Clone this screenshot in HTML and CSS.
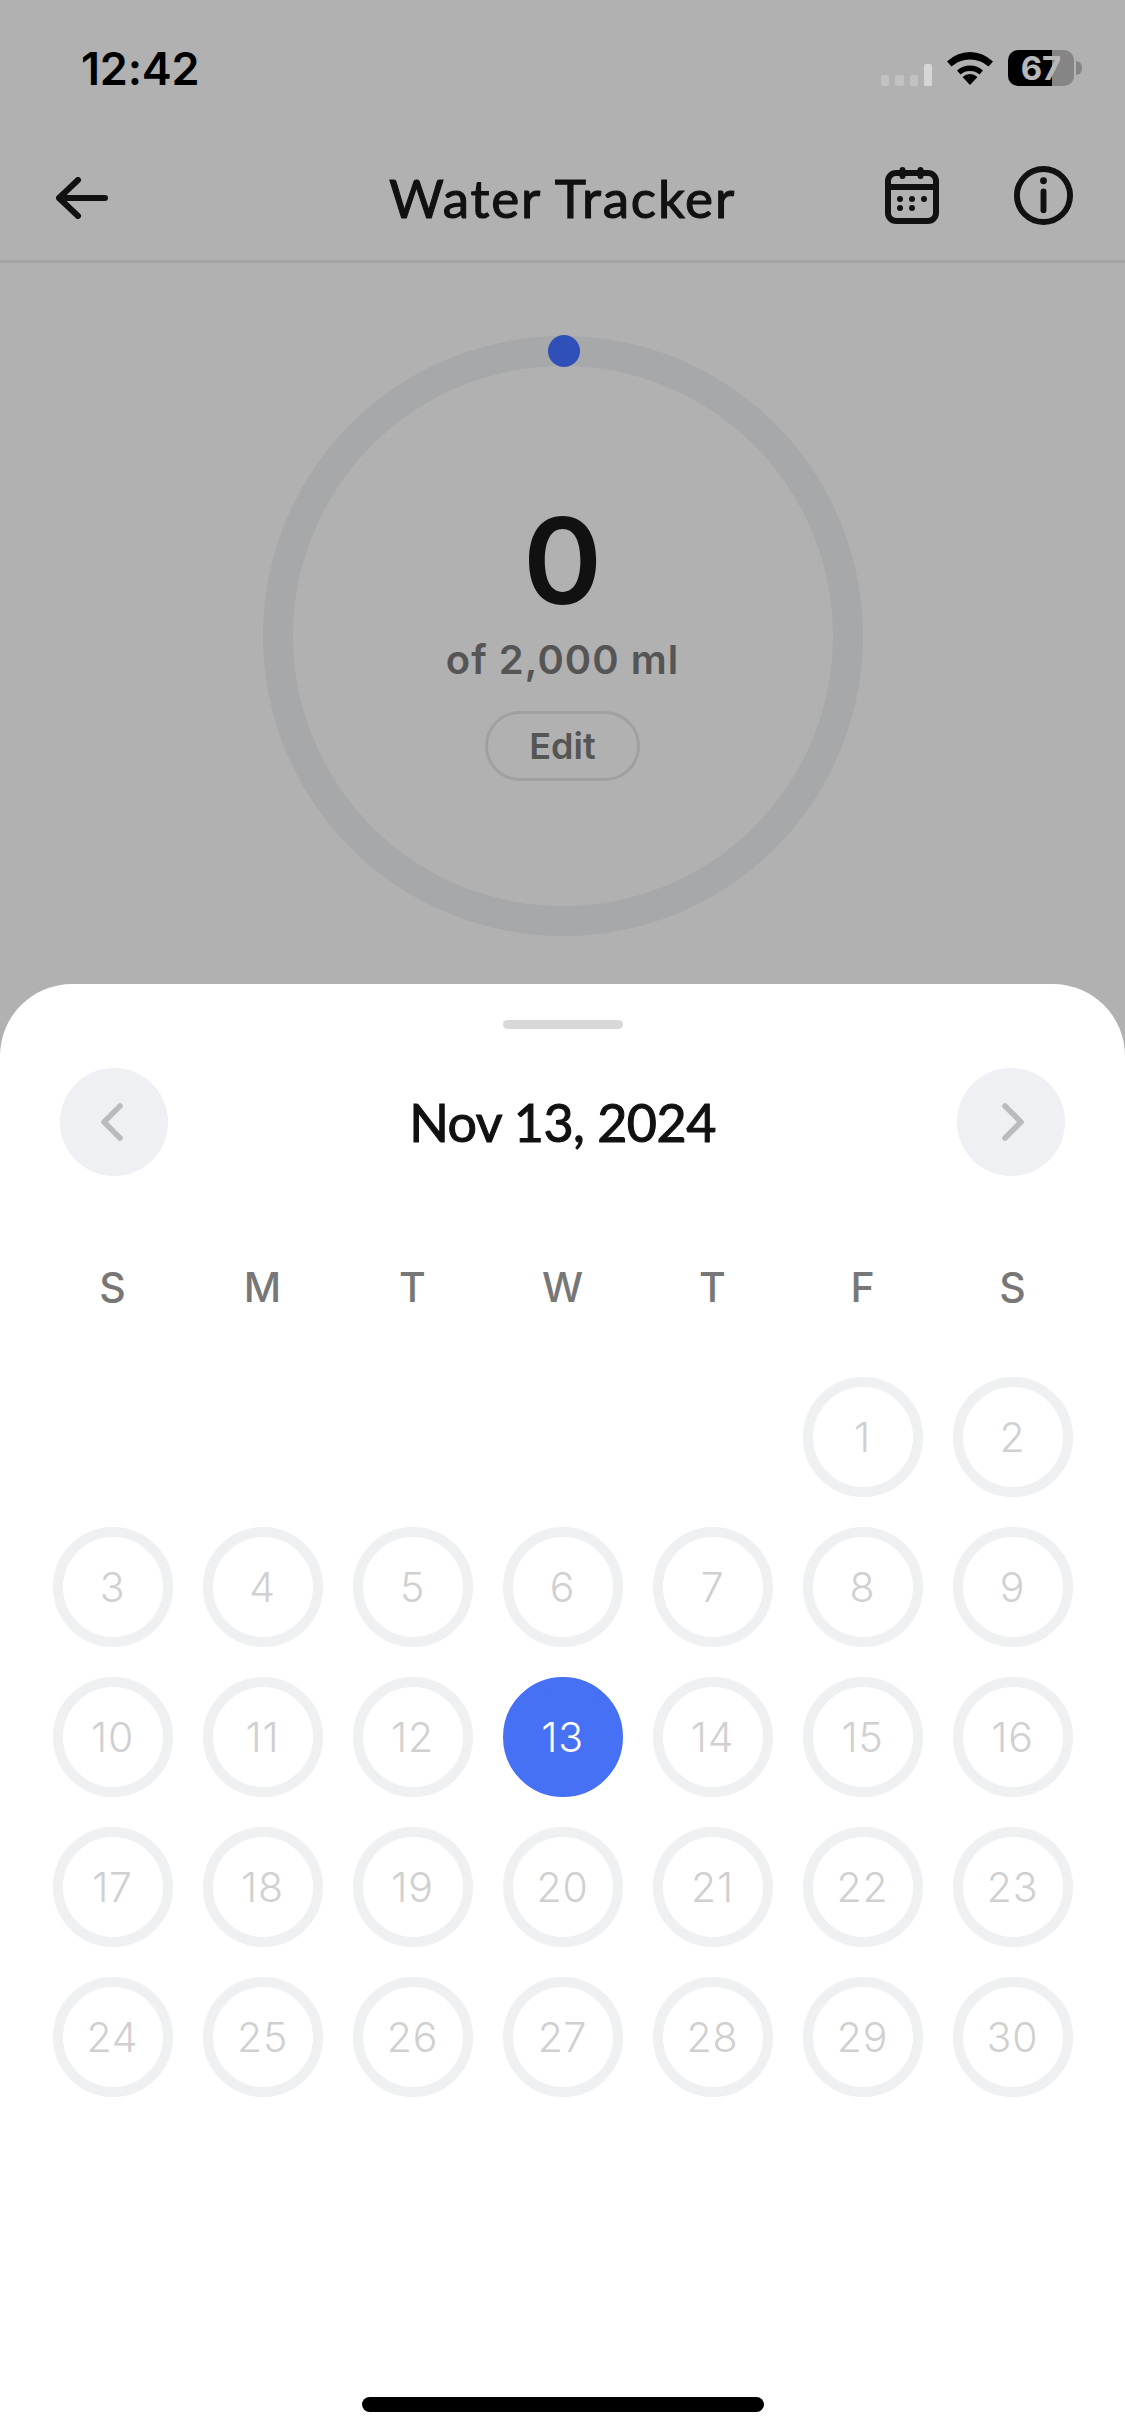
FILE: index.html
```html
<!DOCTYPE html>
<html lang="en">
<head>
<meta charset="utf-8">
<title>Water Tracker</title>
<link rel="stylesheet" href="styles.css">
</head>
<body>
<div class="app">
  <div class="status">
    <span class="time">12:42</span>
    <div class="status-icons">
      <div class="signal"><i></i><i></i><i></i><i class="tall"></i></div>
      <svg class="wifi" viewBox="0 0 46 33"><path d="M23 33 15.500 25A11 11 0 0 1 30.500 25Z M23 13.500A20 20 0 0 1 36 18.500L32.500 22.500A15 15 0 0 0 13.500 22.500L10 18.500A20 20 0 0 1 23 13.500Z M23 0A35 35 0 0 1 46 9.500L41.500 14.500A28 28 0 0 0 4.500 14.500L0 9.500A35 35 0 0 1 23 0Z" fill="#000"/></svg>
      <div class="battery"><div class="battery-body"><span class="battery-num">67</span></div><div class="battery-nub"></div></div>
    </div>
  </div>
  <header class="nav">
    <svg class="back" viewBox="0 0 52 42"><path d="M22 3 3 21 22 39M3 21H49" fill="none" stroke="#111" stroke-width="6" stroke-linecap="round" stroke-linejoin="round"/></svg>
    <h1 class="nav-title">Water Tracker</h1>
    <div class="nav-actions">
      <svg class="cal" viewBox="0 0 54 57"><rect x="3" y="6" width="48" height="48" rx="8" fill="none" stroke="#111" stroke-width="6"/><path d="M3 20H51" stroke="#111" stroke-width="6"/><path d="M17.500 3V9M35.500 3V9" stroke="#111" stroke-width="6" stroke-linecap="round"/><g fill="#111"><circle cx="15" cy="32" r="3"/><circle cx="27" cy="32" r="3"/><circle cx="39" cy="32" r="3"/><circle cx="15" cy="41" r="3"/><circle cx="27" cy="41" r="3"/></g></svg>
      <svg class="info" viewBox="0 0 60 60"><circle cx="30" cy="30" r="27" fill="none" stroke="#111" stroke-width="6"/><circle cx="30" cy="15" r="3.500" fill="#111"/><path d="M30 26V45" stroke="#111" stroke-width="6" stroke-linecap="round"/></svg>
    </div>
  </header>
  <section class="progress">
    <div class="ring">
      <span class="ring-dot"></span>
      <div class="amount">0</div>
      <div class="goal">of 2,000 ml</div>
      <div class="edit">Edit</div>
    </div>
  </section>
  <section class="sheet">
    <div class="handle"></div>
    <div class="month">
      <div class="arrow"><svg viewBox="0 0 26 44"><path d="M19 6 3 22 19 38" fill="none" stroke="#b9bbbf" stroke-width="5.500" stroke-linecap="round" stroke-linejoin="round"/></svg></div>
      <h2 class="date">Nov 13, 2024</h2>
      <div class="arrow"><svg viewBox="0 0 26 44"><path d="M7 6 23 22 7 38" fill="none" stroke="#b9bbbf" stroke-width="5.500" stroke-linecap="round" stroke-linejoin="round"/></svg></div>
    </div>
    <div class="weekdays"><span>S</span><span>M</span><span>T</span><span>W</span><span>T</span><span>F</span><span>S</span></div>
    <div class="days">
      <span class="blank"></span><span class="blank"></span><span class="blank"></span><span class="blank"></span><span class="blank"></span>
      <span class="day">1</span><span class="day">2</span><span class="day">3</span><span class="day">4</span><span class="day">5</span><span class="day">6</span><span class="day">7</span><span class="day">8</span><span class="day">9</span><span class="day">10</span><span class="day">11</span><span class="day">12</span><span class="day selected">13</span><span class="day">14</span><span class="day">15</span><span class="day">16</span><span class="day">17</span><span class="day">18</span><span class="day">19</span><span class="day">20</span><span class="day">21</span><span class="day">22</span><span class="day">23</span><span class="day">24</span><span class="day">25</span><span class="day">26</span><span class="day">27</span><span class="day">28</span><span class="day">29</span><span class="day">30</span>
    </div>
    <div class="home"></div>
  </section>
</div>
</body>
</html>
```
FILE: styles.css
```css
* { box-sizing: border-box; }
html, body { margin: 0; padding: 0; }
body { background: #b1b1b1; font-family: "Inter", "Noto Sans", sans-serif; color: #111; }
.app { width: 1125px; height: 2436px; display: flex; flex-direction: column; overflow: hidden; }

.status { height: 136px; padding: 50px 43px 0 81px; display: flex; justify-content: space-between; align-items: flex-start; }
.time { font-size: 45px; line-height: 38px; font-weight: 600; color: #000; letter-spacing: -0.2px; }
.status-icons { display: flex; align-items: flex-start; }
.signal { display: flex; align-items: flex-end; gap: 6px; width: 51px; height: 22px; margin: 14px 15px 0 0; }
.signal i { display: block; width: 9px; height: 11px; border-radius: 2px; background: #c2c2c2; }
.signal i.tall { height: 22px; background: #d6d6d6; }
.wifi { width: 46px; height: 33px; margin: 2px 15px 0 0; }
.battery { display: flex; align-items: center; }
.battery-body { width: 66px; height: 36px; border-radius: 10px; background: linear-gradient(90deg, #000 44px, #858585 44px); display: flex; align-items: center; justify-content: center; }
.battery-num { font-size: 33px; font-weight: 700; color: #b8b8b8; line-height: 36px; }
.battery-nub { width: 6px; height: 14px; margin-left: 2px; border-radius: 0 7px 7px 0; background: #858585; }

.nav { height: 127px; padding: 0 52px 0 56px; border-bottom: 3px solid #a4a4a4; display: flex; align-items: center; position: relative; }
.back { width: 52px; height: 42px; }
.nav-title { position: absolute; left: 0; right: 0; top: 36px; margin: 0; text-align: center; font-family: "Lato", sans-serif; font-size: 53px; line-height: 52px; font-weight: 400; letter-spacing: 1.8px; -webkit-text-stroke: 1.1px #111; color: #111; }
.nav-actions { margin-left: auto; display: flex; align-items: center; gap: 75px; margin-top: -5px; }
.cal { width: 54px; height: 57px; }
.info { width: 59px; height: 59px; }

.progress { height: 721px; padding-top: 73px; display: flex; justify-content: center; }
.ring { position: relative; width: 600px; height: 600px; border-radius: 50%; border: 30px solid #a6a8a9; display: flex; flex-direction: column; align-items: center; }
.ring-dot { position: absolute; top: -31px; left: 255px; width: 32px; height: 32px; border-radius: 50%; background: #2f50b8; }
.amount { margin-top: 139px; font-size: 120px; line-height: 112px; font-weight: 600; color: #111; }
.goal { margin-top: 19px; font-size: 40px; line-height: 48px; font-weight: 600; color: #555; letter-spacing: 1px; }
.edit { margin-top: 27px; width: 155px; height: 70px; border-radius: 35px; border: 3px solid #a0a0a0; display: flex; align-items: center; justify-content: center; font-size: 36px; font-weight: 600; color: #555; }

.sheet { flex: 1; background: #fff; border-radius: 72px 72px 0 0; display: flex; flex-direction: column; align-items: center; position: relative; }
.handle { width: 120px; height: 9px; margin-top: 36px; border-radius: 5px; background: #d8d8d8; }
.month { width: 1005px; height: 108px; margin-top: 39px; display: flex; align-items: center; justify-content: space-between; }
.arrow { width: 108px; height: 108px; border-radius: 50%; background: #eff0f3; display: flex; align-items: center; justify-content: center; }
.arrow svg { width: 26px; height: 44px; }
.date { margin: 0; font-family: "Lato", sans-serif; font-size: 52px; line-height: 60px; font-weight: 400; letter-spacing: -0.5px; -webkit-text-stroke: 1.1px #111; color: #111; }
.weekdays { margin-top: 87px; width: 1020px; display: grid; grid-template-columns: repeat(7, 120px); column-gap: 30px; text-align: center; font-size: 41px; line-height: 48px; font-weight: 500; color: #777; }
.days { margin-top: 66px; width: 1020px; display: grid; grid-template-columns: repeat(7, 120px); grid-auto-rows: 120px; gap: 30px; }
.day { border-radius: 50%; border: 10px solid #eff0f1; display: flex; align-items: center; justify-content: center; font-size: 41px; letter-spacing: 0.8px; font-weight: 300; color: #d0d0d0; }
.day.selected { background: #4671f4; border-color: #4671f4; color: #fff; }
.home { position: absolute; left: 362px; bottom: 24px; width: 402px; height: 15px; border-radius: 8px; background: #000; }
```
